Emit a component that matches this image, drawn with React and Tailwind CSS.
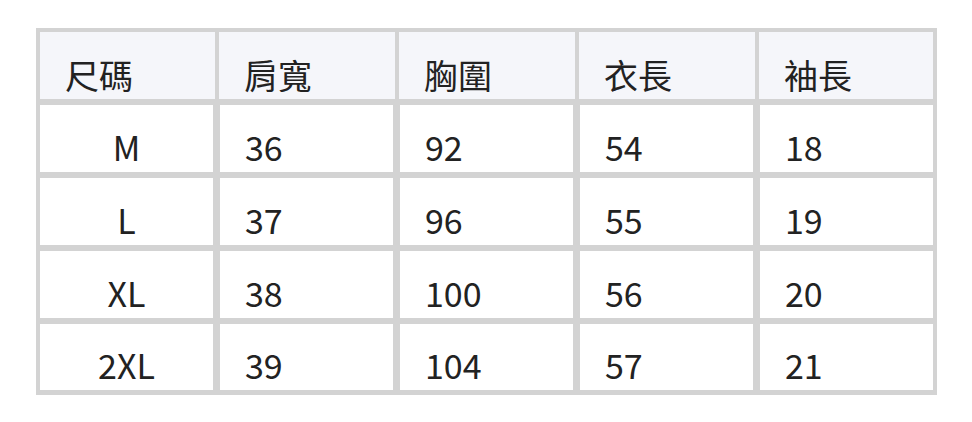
import React from "react";

const header = ["尺碼", "肩寬", "胸圍", "衣長", "袖長"];
const rows = [
  ["M", "36", "92", "54", "18"],
  ["L", "37", "96", "55", "19"],
  ["XL", "38", "100", "56", "20"],
  ["2XL", "39", "104", "57", "21"],
];

export default function App() {
  return (
    <div
      className="w-[972px] h-[422px] bg-white pt-[28px] pl-[36px]"
      style={{ fontFamily: '"Noto Sans CJK TC", "Noto Sans", sans-serif' }}
    >
      <div className="w-[901px] bg-[#d3d3d3] pt-[4px] px-[4px] pb-[5px] flex flex-col gap-[6px] text-[#222] text-[34px] leading-none">
        <div className="grid grid-cols-[175px_176px_176px_176px_174px] gap-[4px] h-[67px]">
          {header.map((h) => (
            <div key={h} className="bg-[#f5f6fa] flex items-end pl-[25px] pb-[2px]">
              <span className="leading-[44px]">{h}</span>
            </div>
          ))}
        </div>
        {rows.map((r, i) => (
          <div
            key={i}
            className={`grid grid-cols-[173px_173px_173px_173px_173px] gap-[7px] ${
              i === 3 ? "h-[66px]" : "h-[67px]"
            }`}
          >
            {r.map((c, j) => (
              <div
                key={j}
                className={`bg-white flex items-end pb-[3px] ${
                  j === 0 ? "justify-center" : "pl-[25px]"
                }`}
              >
                <span className="leading-[44px]">{c}</span>
              </div>
            ))}
          </div>
        ))}
      </div>
    </div>
  );
}
